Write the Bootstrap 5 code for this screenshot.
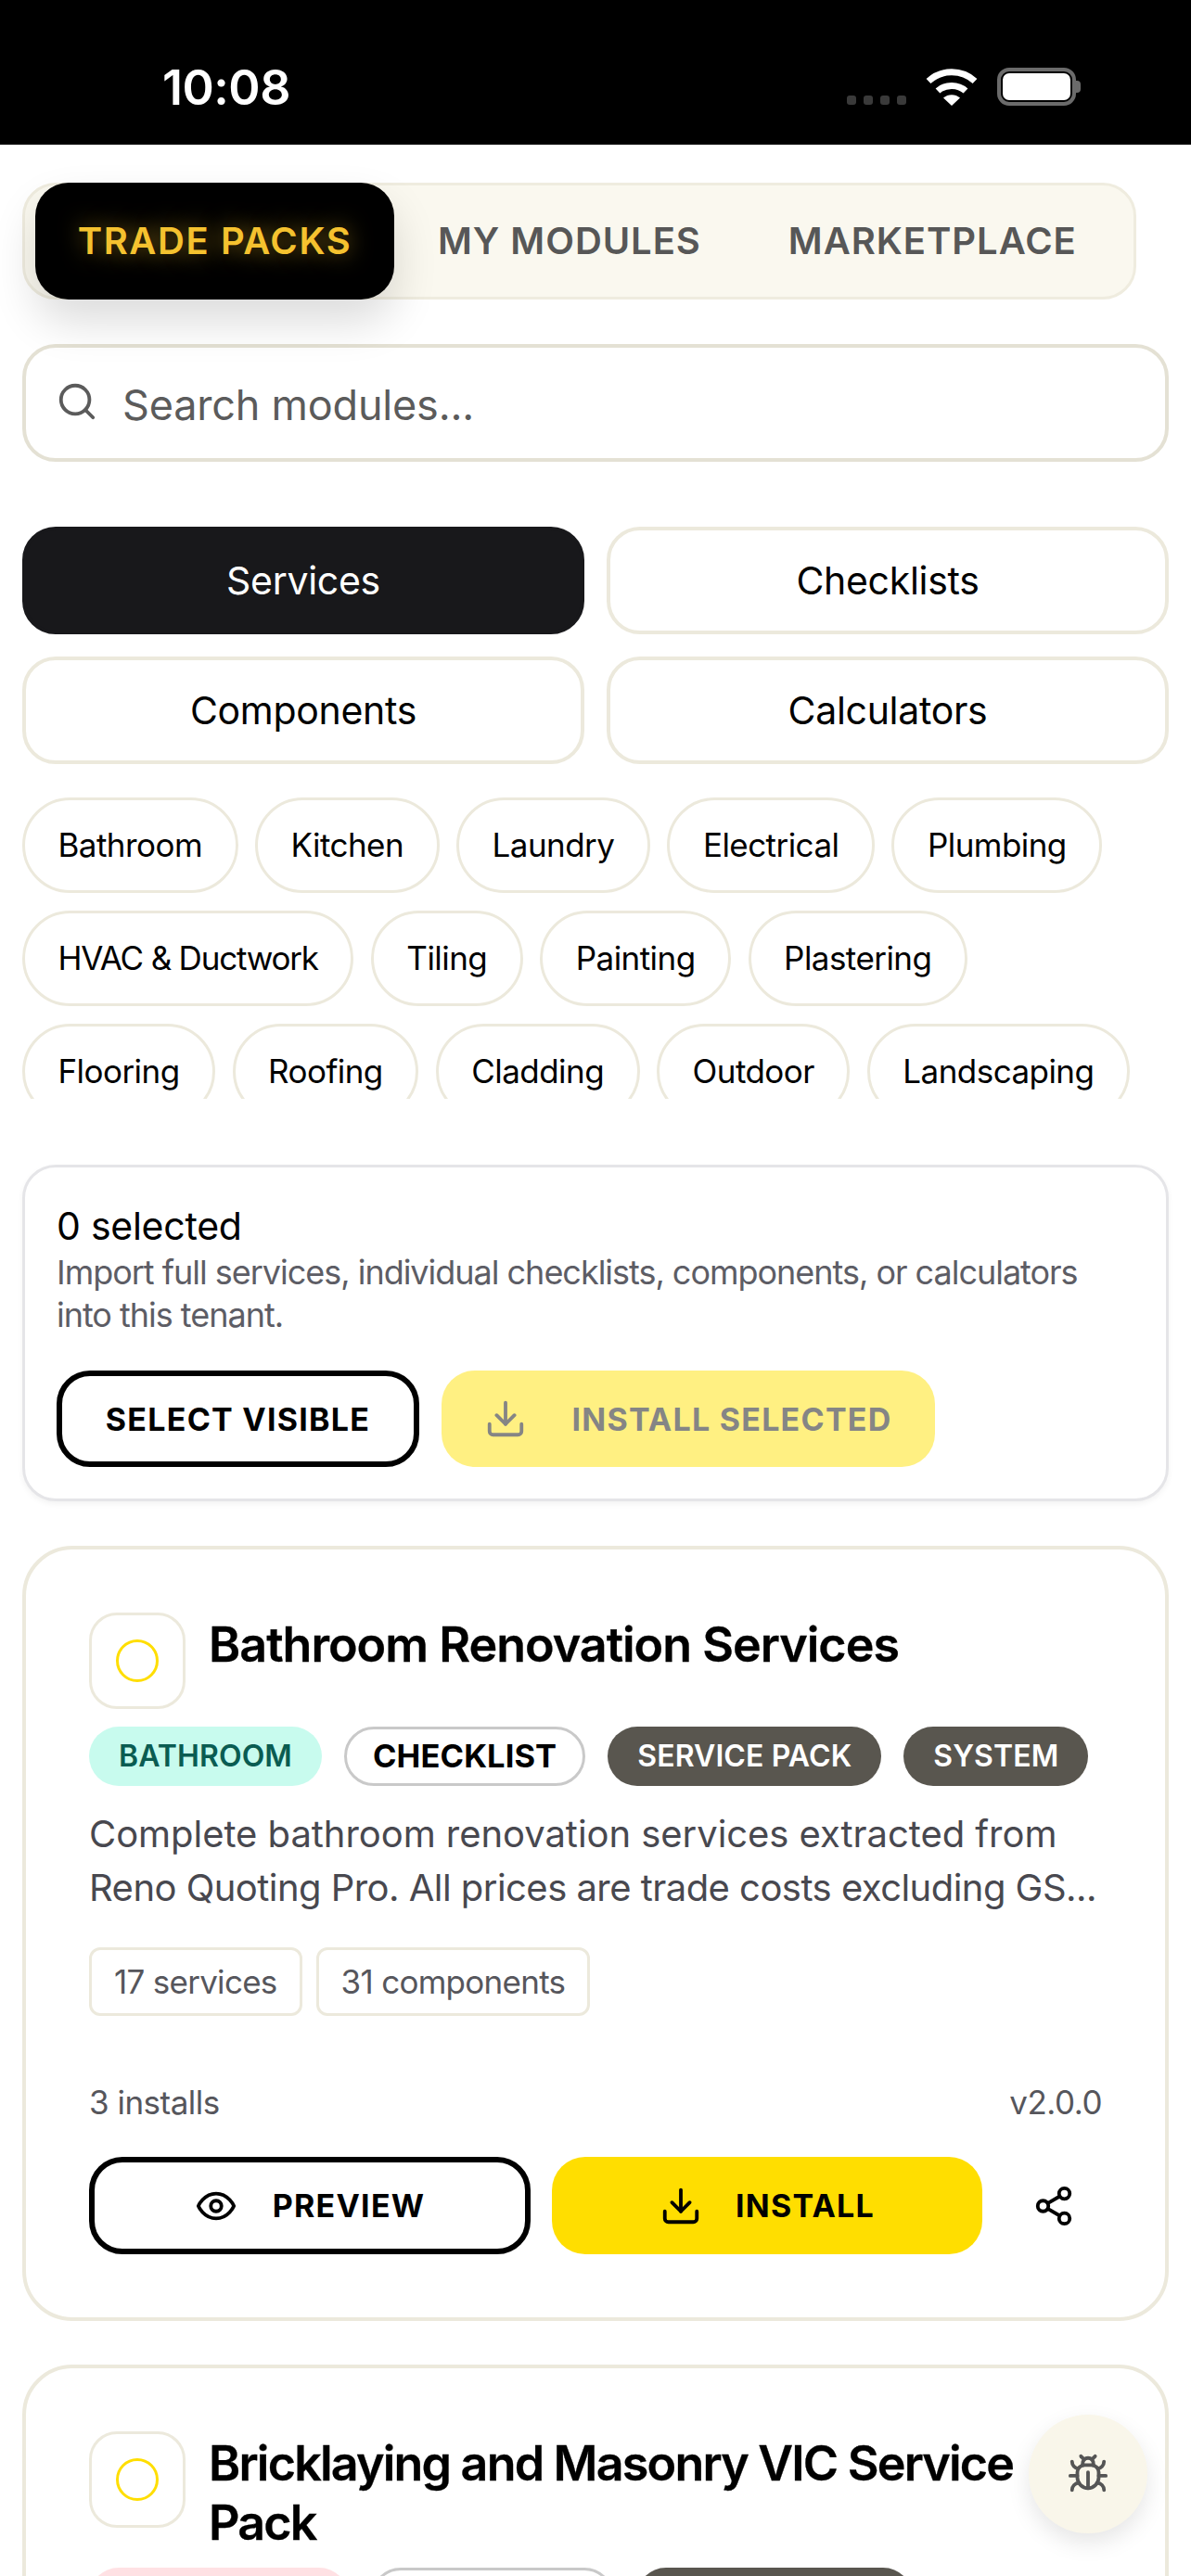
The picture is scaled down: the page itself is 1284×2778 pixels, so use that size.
<!doctype html>
<html lang="en">
<head>
<meta charset="utf-8">
<title>Modules</title>
<link href="https://cdn.jsdelivr.net/npm/bootstrap@5.3.0/dist/css/bootstrap.min.css" rel="stylesheet">
<style>
html,body{height:2778px;overflow:hidden;background:#fff}
body{font-family:Inter,"Noto Sans",sans-serif;color:#000}
.ico{fill:none;stroke:currentColor;stroke-linecap:round;stroke-linejoin:round;stroke-width:2;flex:none}
.statusbar{height:156px;background:#000;color:#fff;padding:33px 119px 0 175px}
.clock{font-size:52px;font-weight:600;line-height:1;letter-spacing:-.5px}
.sysicons{gap:21px;height:41px;margin-top:-3px}
.sigdots{gap:7.5px;padding-top:30px}
.sigdots i{display:block;width:10.5px;height:10.5px;border-radius:3px;background:#3a3a3a}
.batt{width:85px;height:41px;border:4px solid #6b6b6b;border-radius:13px;padding:2px}
.batt i{display:block;height:100%;background:#fff;border-radius:7px}
.battnub{width:5px;height:13px;background:#6b6b6b;border-radius:0 4px 4px 0}
.pagewrap{padding:41px 24px 0;height:2622px;overflow:hidden}
.tabbar{width:1201px;height:126px;background:#faf8ef;border:3px solid #efecdf;border-radius:36px;padding-left:11px;flex-wrap:nowrap;align-items:stretch}
.tabbar .nav-link{font-size:40px;font-weight:600;letter-spacing:.95px;color:#575757;padding:0 47px;margin:-3px 0;display:flex;align-items:center;border-radius:36px;white-space:nowrap;flex:none}
.tabbar .nav-link.active{background:#000;color:#f5c22f;letter-spacing:1.6px;text-shadow:0 0 24px rgba(245,194,47,.55);box-shadow:0 24px 48px rgba(0,0,0,.14);width:387px;padding:0;justify-content:center}
.searchbox{margin-top:48px;height:127px;border:4px solid #e4e1d4;border-radius:36px;padding:0 32px;gap:26px;background:#fff}
.searchbox .ico{color:#5b5b5b;width:46px;height:46px;margin-top:-4px}
.searchbox .form-control{border:0;padding:4px 0 0;font-size:45px;letter-spacing:-.2px;height:auto;box-shadow:none;color:#5b5b5b;background:transparent}
.searchbox .form-control::placeholder{color:#5b5b5b;opacity:1}
.filtergrid{margin-top:70px;grid-template-columns:1fr 1fr;gap:24px}
.filterbtn{height:116px;border:4px solid #ece9dc;border-radius:36px;background:#fff;color:#000;font-size:41px;padding:2px 0 0;letter-spacing:-.3px}
.filterbtn.picked,.filterbtn.picked:hover{background:#18181b;border-color:#18181b;color:#fff}
.chipclip{margin-top:36px;height:325px;overflow:hidden;gap:19px 18.5px;align-content:flex-start}
.tagchip{height:103px;border:3px solid #ece9dc;border-radius:52px;padding:0 35.500px;background:#fff;color:#000;font-size:35px;letter-spacing:-.55px;white-space:nowrap}
.tagchip.hvac{letter-spacing:-1.2px}
.selectpanel{margin-top:71px;height:363px;border:3px solid #e5e5e8;border-radius:36px;padding:40px 34px 0;box-shadow:0 3px 6px rgba(0,0,0,.05)}
.selcount{font-size:41px;line-height:46px;letter-spacing:-.25px;color:#000}
.seldesc{font-size:36px;line-height:46px;letter-spacing:-1.02px;color:#5d5d65;margin-top:4px}
.selbtns{gap:24px;margin-top:37px}
.actbtn{height:104px;border-radius:36px;font-size:34px;font-weight:700;letter-spacing:1.25px;padding:0;display:flex;align-items:center;justify-content:center;white-space:nowrap}
.outlinebtn,.outlinebtn:hover{background:#fff;border:6px solid #000;color:#000}
.selectvis{width:391px}
.installsel,.installsel:disabled{width:532px;background:#fff082;color:#858585;border:0;opacity:1;gap:48px}
.installsel .ico,.installmain .ico{width:46px;height:46px;stroke-width:2}
.packcard{border:4px solid #ece9dc;border-radius:54px;background:#fff;padding:68px}
.firstpack{height:836px;margin-top:48px}
.secondpack{height:400px;margin-top:47px}
.checkbx{width:104px;height:104px;border:3px solid #ece9dc;border-radius:30px;background:#fff;flex:none}
.checkring{width:46px;height:46px;border:3px solid #ffde00;border-radius:50%}
.packtitle{font-size:52px;line-height:64px;font-weight:600;letter-spacing:-1px;margin:3px 0 0 25px;color:#000;-webkit-text-stroke:.3px #000}
.packtitle.dense{letter-spacing:-1.8px}
.badgewrap{gap:24px;margin-top:19px}
.secondpack .badgewrap{margin-top:16px}
.tagbadge{height:64px;font-size:32px;font-weight:600;letter-spacing:.1px;border-radius:32px;padding:0 32px;display:flex;align-items:center;line-height:1}
.tb-mint{background:#c8fbee;color:#0a5c52}
.tb-rose{background:#ffe1e4;width:280px}
.tb-white{background:#fff;color:#000;border:3px solid #c9c9c9;padding:0 28px;font-size:34.500px;font-weight:700}
.tb-blank{width:262px}
.tb-dark{background:#59564f;color:#fff}
.tb-wide{width:298px}
.packdesc{font-size:40px;line-height:58px;color:#48484f;margin:23px 0 0}
.dline{display:block;white-space:nowrap}
.dline-a{letter-spacing:-.05px}
.dline-b{letter-spacing:-.54px}
.statwrap{gap:15px;margin-top:35px}
.statchip{height:74px;border:3px solid #ece9dc;border-radius:12px;padding:0 24px;font-size:35px;letter-spacing:-.72px;color:#56565c;display:flex;align-items:center}
.metarow{margin-top:70px;font-size:35px;line-height:46px;letter-spacing:-.5px;color:#56565c}
.packbtns{gap:23px;margin-top:36px}
.packbtns .actbtn{height:105px}
.previewbtn{width:476px;gap:38px}
.previewbtn .ico{width:46px;height:46px;stroke-width:2}
.installmain,.installmain:hover{width:464px;background:#ffde00;color:#000;border:0;gap:36px}
.sharebtn{width:100px;height:105px;border:0;background:transparent;color:#000;padding:0;margin-left:4px}
.sharebtn .ico{width:46px;height:46px}
.bugfab{position:fixed;left:1109px;top:2604px;width:128px;height:128px;border-radius:50%;border:0;padding:0;background:#f9f6ea;color:#555;box-shadow:0 10px 24px rgba(0,0,0,.1);z-index:5}
.bugfab .ico{width:46px;height:46px}
</style>
</head>
<body>
<svg width="0" height="0" class="position-absolute">
  <symbol id="i-search" viewBox="0 0 24 24"><circle cx="11" cy="11" r="8"/><path d="m21 21-4.3-4.3"/></symbol>
  <symbol id="i-down" viewBox="0 0 24 24"><path d="M21 15v4a2 2 0 0 1-2 2H5a2 2 0 0 1-2-2v-4"/><path d="M7 10l5 5 5-5"/><path d="M12 15V3"/></symbol>
  <symbol id="i-eye" viewBox="0 0 24 24"><path d="M2 12s3-7 10-7 10 7 10 7-3 7-10 7-10-7-10-7Z"/><circle cx="12" cy="12" r="3"/></symbol>
  <symbol id="i-share" viewBox="0 0 24 24"><circle cx="18" cy="5" r="3"/><circle cx="6" cy="12" r="3"/><circle cx="18" cy="19" r="3"/><path d="m8.59 13.51 6.83 3.98"/><path d="m15.41 6.51-6.82 3.98"/></symbol>
  <symbol id="i-bug" viewBox="0 0 24 24"><path d="m8 2 1.88 1.88"/><path d="M14.12 3.88 16 2"/><path d="M9 7.13v-1a3.003 3.003 0 1 1 6 0v1"/><path d="M12 20c-3.3 0-6-2.7-6-6v-3a4 4 0 0 1 4-4h4a4 4 0 0 1 4 4v3c0 3.3-2.7 6-6 6"/><path d="M12 20v-9"/><path d="M6.53 9C4.6 8.8 3 7.1 3 5"/><path d="M6 13H2"/><path d="M3 21c0-2.1 1.7-3.9 3.8-4"/><path d="M20.97 5c0 2.1-1.6 3.8-3.5 4"/><path d="M22 13h-4"/><path d="M17.2 17c2.1.1 3.8 1.9 3.8 4"/></symbol>
</svg>

<header class="statusbar d-flex justify-content-between align-items-center">
  <div class="clock">10:08</div>
  <div class="sysicons d-flex align-items-center">
    <div class="sigdots d-flex"><i></i><i></i><i></i><i></i></div>
    <svg width="56" height="41" viewBox="0 0 56 41" aria-hidden="true"><g fill="none" stroke="#fff" stroke-width="7"><path d="M3 14.500C17 1.500 39 1.500 53 14.500"/><path d="M13 25C21 17.500 35 17.500 43 25"/></g><path d="M19 32.500C24 28 32 28 37 32.500L28 41Z" fill="#fff"/></svg>
    <div class="d-flex align-items-center"><div class="batt"><i></i></div><div class="battnub"></div></div>
  </div>
</header>

<main class="pagewrap">
  <nav class="nav tabbar">
    <a class="nav-link active" href="#">TRADE PACKS</a>
    <a class="nav-link" href="#">MY MODULES</a>
    <a class="nav-link" href="#">MARKETPLACE</a>
  </nav>

  <div class="searchbox d-flex align-items-center">
    <svg class="ico"><use href="#i-search"/></svg>
    <input class="form-control" type="text" placeholder="Search modules...">
  </div>

  <div class="filtergrid d-grid">
    <button class="btn filterbtn picked">Services</button>
    <button class="btn filterbtn">Checklists</button>
    <button class="btn filterbtn">Components</button>
    <button class="btn filterbtn">Calculators</button>
  </div>

  <div class="chipclip d-flex flex-wrap">
    <button class="btn tagchip">Bathroom</button>
    <button class="btn tagchip">Kitchen</button>
    <button class="btn tagchip">Laundry</button>
    <button class="btn tagchip">Electrical</button>
    <button class="btn tagchip">Plumbing</button>
    <button class="btn tagchip hvac">HVAC &amp; Ductwork</button>
    <button class="btn tagchip">Tiling</button>
    <button class="btn tagchip">Painting</button>
    <button class="btn tagchip">Plastering</button>
    <button class="btn tagchip">Flooring</button>
    <button class="btn tagchip">Roofing</button>
    <button class="btn tagchip">Cladding</button>
    <button class="btn tagchip">Outdoor</button>
    <button class="btn tagchip">Landscaping</button>
  </div>

  <section class="card selectpanel">
    <div class="selcount">0 selected</div>
    <div class="seldesc">Import full services, individual checklists, components, or calculators into this tenant.</div>
    <div class="selbtns d-flex">
      <button class="btn actbtn outlinebtn selectvis">SELECT VISIBLE</button>
      <button class="btn actbtn installsel" disabled><svg class="ico"><use href="#i-down"/></svg>INSTALL SELECTED</button>
    </div>
  </section>

  <article class="card packcard firstpack">
    <div class="d-flex">
      <div class="checkbx d-flex align-items-center justify-content-center"><div class="checkring"></div></div>
      <h2 class="packtitle">Bathroom Renovation Services</h2>
    </div>
    <div class="badgewrap d-flex">
      <span class="tagbadge tb-mint">BATHROOM</span>
      <span class="tagbadge tb-white">CHECKLIST</span>
      <span class="tagbadge tb-dark">SERVICE PACK</span>
      <span class="tagbadge tb-dark">SYSTEM</span>
    </div>
    <p class="packdesc"><span class="dline dline-a">Complete bathroom renovation services extracted from</span><span class="dline dline-b">Reno Quoting Pro. All prices are trade costs excluding GS...</span></p>
    <div class="statwrap d-flex">
      <span class="statchip">17 services</span>
      <span class="statchip">31 components</span>
    </div>
    <div class="metarow d-flex justify-content-between"><span>3 installs</span><span>v2.0.0</span></div>
    <div class="packbtns d-flex">
      <button class="btn actbtn outlinebtn previewbtn"><svg class="ico"><use href="#i-eye"/></svg>PREVIEW</button>
      <button class="btn actbtn installmain"><svg class="ico"><use href="#i-down"/></svg>INSTALL</button>
      <button class="btn sharebtn"><svg class="ico"><use href="#i-share"/></svg></button>
    </div>
  </article>

  <article class="card packcard secondpack">
    <div class="d-flex">
      <div class="checkbx d-flex align-items-center justify-content-center"><div class="checkring"></div></div>
      <h2 class="packtitle dense">Bricklaying and Masonry VIC Service Pack</h2>
    </div>
    <div class="badgewrap d-flex" aria-hidden="true">
      <span class="tagbadge tb-rose"></span>
      <span class="tagbadge tb-white tb-blank"></span>
      <span class="tagbadge tb-dark tb-wide"></span>
    </div>
  </article>
</main>

<button class="bugfab d-flex align-items-center justify-content-center" aria-label="Report a bug"><svg class="ico"><use href="#i-bug"/></svg></button>
<script src="https://cdn.jsdelivr.net/npm/bootstrap@5.3.0/dist/js/bootstrap.bundle.min.js"></script>
</body>
</html>
